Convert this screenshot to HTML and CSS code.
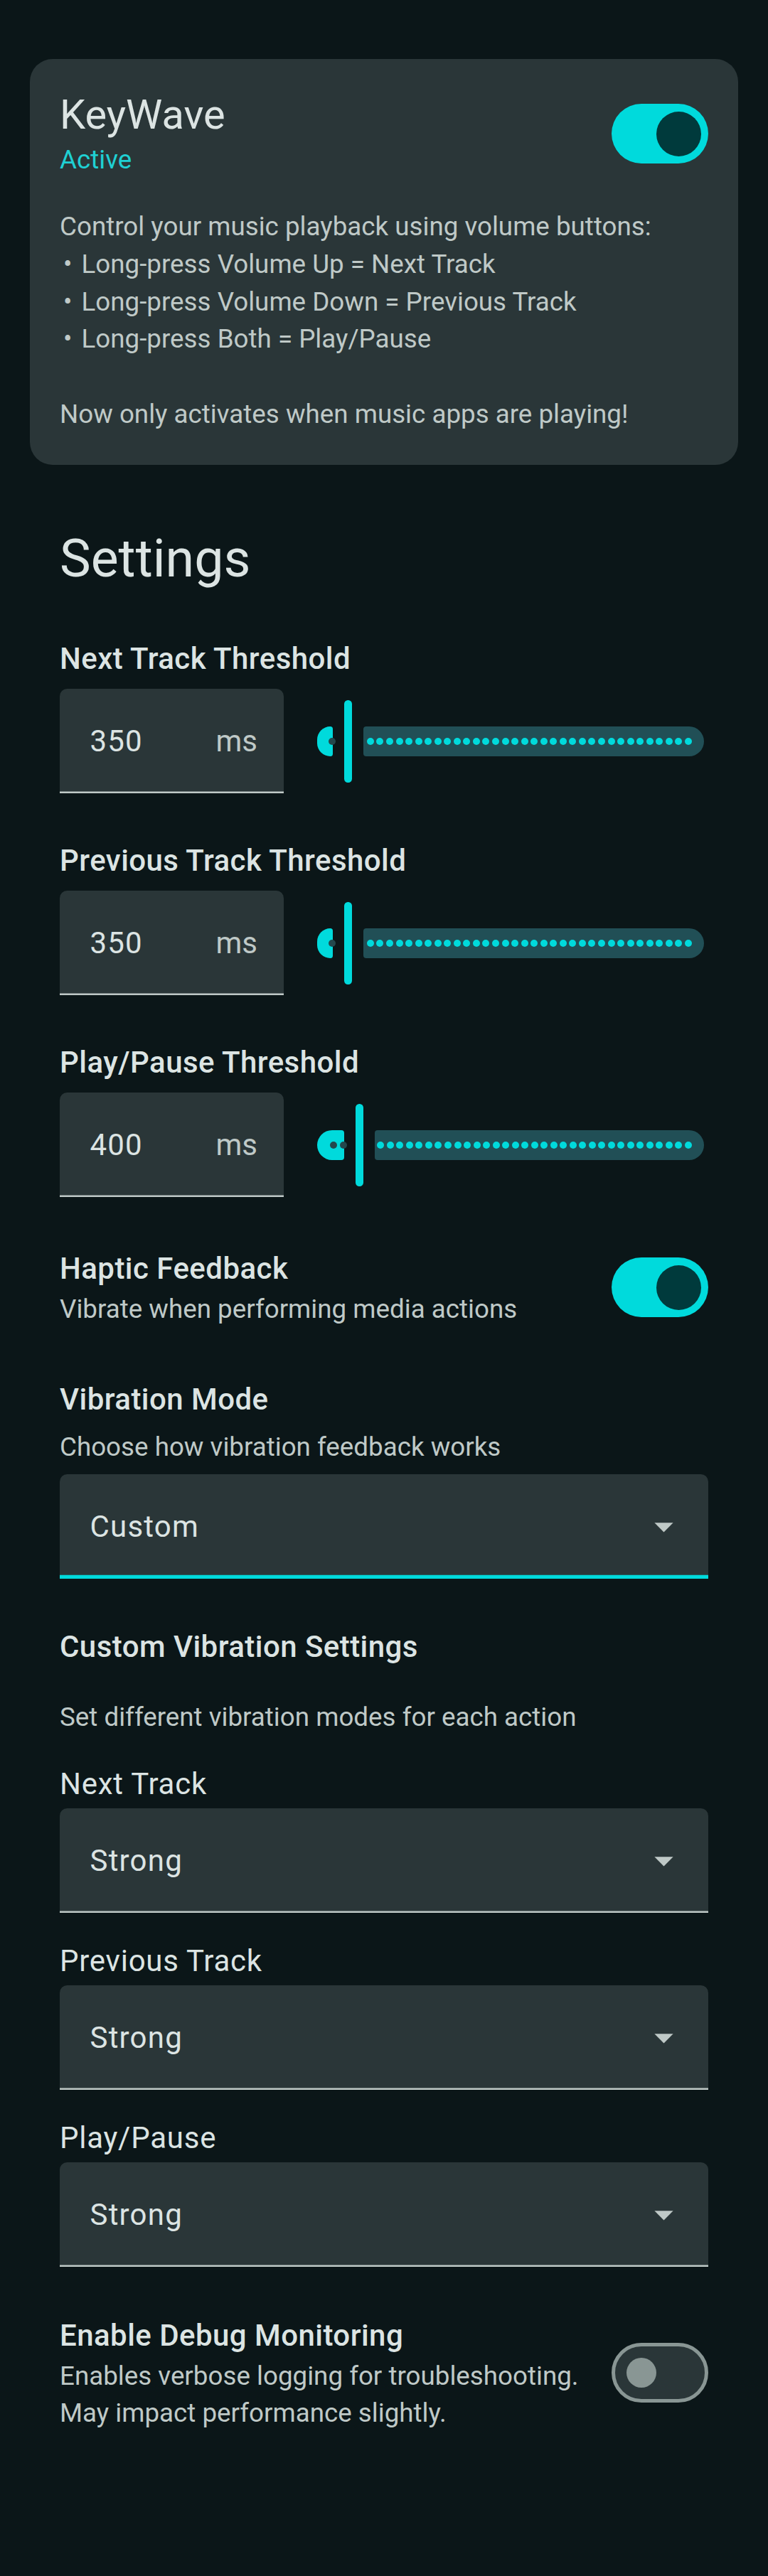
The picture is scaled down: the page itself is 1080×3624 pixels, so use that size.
FILE: index.html
```html
<!DOCTYPE html>
<html lang="en">
<head>
<meta charset="utf-8">
<title>KeyWave</title>
<link rel="stylesheet" href="styles.css">
</head>
<body>
<main class="screen">
  <section class="status-card">
    <div class="status-head">
      <div class="status-text">
        <h2 class="status-title">KeyWave</h2>
        <p class="status-state">Active</p>
      </div>
      <div class="switch switch-on" role="switch" aria-checked="true"><span class="switch-thumb"></span></div>
    </div>
    <p class="status-desc">Control your music playback using volume buttons:<br><span class="bullet">•</span> Long-press Volume Up = Next Track<br><span class="bullet">•</span> Long-press Volume Down = Previous Track<br><span class="bullet">•</span> Long-press Both = Play/Pause<br><br>Now only activates when music apps are playing!</p>
  </section>

  <h1 class="section-title">Settings</h1>

  <div class="settings">
    <div class="threshold">
      <h3 class="label-strong">Next Track Threshold</h3>
      <div class="threshold-row">
        <div class="field"><span class="field-value">350</span><span class="field-suffix">ms</span></div>
        <div class="slider">
          <div class="track-active" style="width:22px"><span class="stop"></span></div>
          <div class="slider-thumb"></div>
          <div class="track-inactive">
            <span class="tick"></span><span class="tick"></span><span class="tick"></span><span class="tick"></span><span class="tick"></span><span class="tick"></span><span class="tick"></span><span class="tick"></span><span class="tick"></span><span class="tick"></span>
            <span class="tick"></span><span class="tick"></span><span class="tick"></span><span class="tick"></span><span class="tick"></span><span class="tick"></span><span class="tick"></span><span class="tick"></span><span class="tick"></span><span class="tick"></span>
            <span class="tick"></span><span class="tick"></span><span class="tick"></span><span class="tick"></span><span class="tick"></span><span class="tick"></span><span class="tick"></span><span class="tick"></span><span class="tick"></span><span class="tick"></span>
            <span class="tick"></span><span class="tick"></span><span class="tick"></span><span class="tick"></span>
          </div>
        </div>
      </div>
    </div>

    <div class="threshold">
      <h3 class="label-strong">Previous Track Threshold</h3>
      <div class="threshold-row">
        <div class="field"><span class="field-value">350</span><span class="field-suffix">ms</span></div>
        <div class="slider">
          <div class="track-active" style="width:22px"><span class="stop"></span></div>
          <div class="slider-thumb"></div>
          <div class="track-inactive">
            <span class="tick"></span><span class="tick"></span><span class="tick"></span><span class="tick"></span><span class="tick"></span><span class="tick"></span><span class="tick"></span><span class="tick"></span><span class="tick"></span><span class="tick"></span>
            <span class="tick"></span><span class="tick"></span><span class="tick"></span><span class="tick"></span><span class="tick"></span><span class="tick"></span><span class="tick"></span><span class="tick"></span><span class="tick"></span><span class="tick"></span>
            <span class="tick"></span><span class="tick"></span><span class="tick"></span><span class="tick"></span><span class="tick"></span><span class="tick"></span><span class="tick"></span><span class="tick"></span><span class="tick"></span><span class="tick"></span>
            <span class="tick"></span><span class="tick"></span><span class="tick"></span><span class="tick"></span>
          </div>
        </div>
      </div>
    </div>

    <div class="threshold">
      <h3 class="label-strong">Play/Pause Threshold</h3>
      <div class="threshold-row">
        <div class="field"><span class="field-value">400</span><span class="field-suffix">ms</span></div>
        <div class="slider">
          <div class="track-active" style="width:38px"><span class="stop"></span><span class="stop"></span></div>
          <div class="slider-thumb"></div>
          <div class="track-inactive track-inactive-short">
            <span class="tick"></span><span class="tick"></span><span class="tick"></span><span class="tick"></span><span class="tick"></span><span class="tick"></span><span class="tick"></span><span class="tick"></span><span class="tick"></span><span class="tick"></span>
            <span class="tick"></span><span class="tick"></span><span class="tick"></span><span class="tick"></span><span class="tick"></span><span class="tick"></span><span class="tick"></span><span class="tick"></span><span class="tick"></span><span class="tick"></span>
            <span class="tick"></span><span class="tick"></span><span class="tick"></span><span class="tick"></span><span class="tick"></span><span class="tick"></span><span class="tick"></span><span class="tick"></span><span class="tick"></span><span class="tick"></span>
            <span class="tick"></span><span class="tick"></span><span class="tick"></span>
          </div>
        </div>
      </div>
    </div>

    <div class="switch-row haptic-row">
      <div class="switch-text">
        <h3 class="label-strong">Haptic Feedback</h3>
        <p class="support">Vibrate when performing media actions</p>
      </div>
      <div class="switch switch-on" role="switch" aria-checked="true"><span class="switch-thumb"></span></div>
    </div>

    <div class="vibration-mode">
      <h3 class="label-strong">Vibration Mode</h3>
      <p class="support support-gap">Choose how vibration feedback works</p>
      <div class="dropdown dropdown-focused">
        <span class="dropdown-value">Custom</span>
        <svg class="dropdown-icon" viewBox="0 0 24 24" width="63" height="63"><path d="M7 10l5 5 5-5z"/></svg>
      </div>
    </div>

    <div class="custom-vibration">
      <h3 class="label-strong">Custom Vibration Settings</h3>
      <p class="support custom-desc">Set different vibration modes for each action</p>

      <div class="action-group">
        <p class="label-plain">Next Track</p>
        <div class="dropdown">
          <span class="dropdown-value">Strong</span>
          <svg class="dropdown-icon" viewBox="0 0 24 24" width="63" height="63"><path d="M7 10l5 5 5-5z"/></svg>
        </div>
      </div>
      <div class="action-group">
        <p class="label-plain">Previous Track</p>
        <div class="dropdown">
          <span class="dropdown-value">Strong</span>
          <svg class="dropdown-icon" viewBox="0 0 24 24" width="63" height="63"><path d="M7 10l5 5 5-5z"/></svg>
        </div>
      </div>
      <div class="action-group">
        <p class="label-plain">Play/Pause</p>
        <div class="dropdown">
          <span class="dropdown-value">Strong</span>
          <svg class="dropdown-icon" viewBox="0 0 24 24" width="63" height="63"><path d="M7 10l5 5 5-5z"/></svg>
        </div>
      </div>
    </div>

    <div class="switch-row debug-row">
      <div class="switch-text">
        <h3 class="label-strong">Enable Debug Monitoring</h3>
        <p class="support">Enables verbose logging for troubleshooting. May impact performance slightly.</p>
      </div>
      <div class="switch switch-off" role="switch" aria-checked="false"><span class="switch-thumb"></span></div>
    </div>
  </div>
</main>
</body>
</html>
```

FILE: styles.css
```css
* { box-sizing: border-box; }

html, body {
  margin: 0;
  padding: 0;
}

body {
  background: #0b1618;
  color: #dce4e3;
  font-family: Roboto, "Noto Sans", "Liberation Sans", sans-serif;
  width: 1080px;
}

.screen {
  padding: 83px 42px 0;
  min-height: 3624px;
}

/* Status card */
.status-card {
  background: #2a3638;
  border-radius: 32px;
  padding: 42px 42px 44px;
}

.status-head {
  display: flex;
  align-items: center;
  justify-content: space-between;
}

.status-title {
  margin: 0;
  font-size: 57.75px;
  line-height: 73.5px;
  font-weight: 400;
  color: #dce4e3;
}

.status-state {
  margin: 0;
  font-size: 36.75px;
  line-height: 52.5px;
  color: #1fd0d3;
}

.status-desc {
  margin: 42px 0 0;
  font-size: 36.75px;
  line-height: 52.8px;
  color: #bfc9c7;
}

.bullet {
  display: inline-block;
  margin: 0 4px 0 5px;
}

/* Switch */
.switch {
  flex: none;
  width: 136px;
  height: 84px;
  border-radius: 42px;
  display: flex;
  align-items: center;
}

.switch-on {
  background: #00dadc;
  justify-content: flex-end;
  padding-right: 10.5px;
}

.switch-on .switch-thumb {
  width: 63px;
  height: 63px;
  border-radius: 50%;
  background: #003a3c;
}

.switch-off {
  background: #2a3638;
  border: 5.25px solid #899694;
  justify-content: flex-start;
  padding-left: 15.75px;
}

.switch-off .switch-thumb {
  width: 42px;
  height: 42px;
  border-radius: 50%;
  background: #899694;
}

/* Section title */
.section-title {
  margin: 85px 0 0;
  padding: 0 42px;
  font-size: 73.5px;
  line-height: 94.5px;
  font-weight: 400;
  color: #dce4e3;
}

.settings {
  padding: 0 42px;
  margin-top: 62px;
}

.label-strong {
  margin: 0;
  font-size: 42px;
  line-height: 63px;
  font-weight: 500;
  letter-spacing: 0.45px;
  color: #dce4e3;
}

.label-plain {
  margin: 0;
  font-size: 42px;
  line-height: 63px;
  font-weight: 400;
  letter-spacing: 0.75px;
  color: #dce4e3;
}

.support {
  margin: 0;
  font-size: 36.75px;
  line-height: 52.5px;
  color: #bfc9c7;
}

/* Thresholds */
.threshold + .threshold {
  margin-top: 63px;
}

.threshold-row {
  display: flex;
  align-items: center;
  margin-top: 11px;
}

.field {
  flex: none;
  width: 315px;
  height: 147px;
  background: #2a3638;
  border-radius: 10.5px 10.5px 0 0;
  box-shadow: inset 0 -2.6px 0 #bfc9c7;
  display: flex;
  align-items: center;
  justify-content: space-between;
  padding: 0 37px 0 42.5px;
  font-size: 42px;
  line-height: 63px;
}

.field-value {
  color: #dce4e3;
  letter-spacing: 1.2px;
}

.field-suffix {
  color: #bfc9c7;
}

.slider {
  flex: 1;
  height: 116px;
  margin: 0 6px 0 47px;
  display: flex;
  align-items: center;
}

.track-active {
  flex: none;
  height: 42px;
  background: #00dadc;
  border-radius: 21px 4px 4px 21px;
  display: flex;
  align-items: center;
  justify-content: flex-end;
  gap: 4px;
}

.stop {
  flex: none;
  width: 10px;
  height: 10px;
  border-radius: 50%;
  background: #24484d;
}

.track-active .stop:last-child {
  margin-right: -3.5px;
}

.slider-thumb {
  flex: none;
  width: 10.5px;
  height: 116px;
  border-radius: 5.25px;
  background: #00dadc;
  margin: 0 16.2px;
}

.track-inactive {
  flex: 1;
  height: 42px;
  background: #214f56;
  border-radius: 4px 21px 21px 4px;
  display: flex;
  align-items: center;
  justify-content: space-between;
  padding: 0 17px 0 5px;
}

.track-inactive-short {
  padding-left: 3.5px;
}

.tick {
  flex: none;
  width: 10px;
  height: 10px;
  border-radius: 50%;
  background: #00dadc;
}

/* Switch rows */
.switch-row {
  display: flex;
  align-items: center;
  justify-content: space-between;
  gap: 42px;
}

.switch-text {
  flex: 1;
  min-width: 0;
}

.haptic-row {
  margin-top: 69px;
}

.debug-row {
  margin-top: 64.7px;
}

/* Vibration mode */
.vibration-mode {
  margin-top: 68px;
}

.support-gap {
  margin-top: 10.7px;
}

.dropdown {
  height: 147px;
  background: #2a3638;
  border-radius: 10.5px 10.5px 0 0;
  box-shadow: inset 0 -2.6px 0 #bfc9c7;
  display: flex;
  align-items: center;
  justify-content: space-between;
  padding-left: 42.5px;
  padding-right: 31.5px;
  font-size: 42px;
  line-height: 63px;
  color: #dce4e3;
}

.dropdown-value {
  letter-spacing: 1.2px;
}

.vibration-mode .dropdown {
  margin-top: 11.2px;
}

.dropdown-focused {
  box-shadow: inset 0 -5.25px 0 #00dadc;
}

.dropdown-icon {
  flex: none;
  display: block;
  fill: #bfc9c7;
}

/* Custom vibration */
.custom-vibration {
  margin-top: 63.5px;
}

.custom-desc {
  margin-top: 42px;
}

.action-group {
  margin-top: 36px;
}

.action-group .dropdown {
  margin-top: 3px;
}
```
